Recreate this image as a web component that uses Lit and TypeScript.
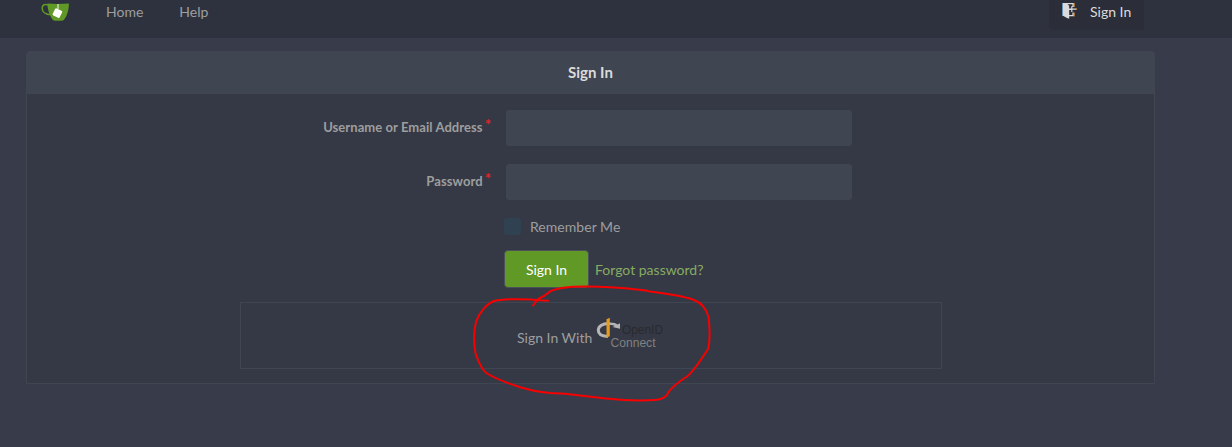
import { LitElement, html, css } from "lit";
import { customElement } from "lit/decorators.js";

@customElement("app-root")
export class AppRoot extends LitElement {
  static styles = css`
    :host {
      display: block;
      position: relative;
      height: 447px;
      overflow: hidden;
      background: #383c4a;
      color: #9e9e9e;
      font: 14px/20px Lato, "Liberation Sans", sans-serif;
    }
    * { box-sizing: border-box; }
    .nav {
      display: flex;
      height: 38px;
      padding: 0 88px 0 41px;
      background: #2e323e;
    }
    .logo { width: 28px; height: 22px; margin-right: 37px; }
    .nav-link { margin-right: 36px; padding-top: 2px; }
    .nav-sign {
      display: flex;
      width: 95px;
      height: 30px;
      margin-left: auto;
      padding: 2px 0 0 13px;
      border-radius: 0 0 4px 4px;
      background: #2b2d39;
      color: #dbdbdb;
    }
    .door { width: 15px; height: 18px; margin: 0 13px 0 0; }
    .card { width: 1129px; height: 333px; margin: 13px 0 0 26px; border: 1px solid #404552; border-radius: 4px 4px 0 0; background: #353945; }
    .title {
      height: 42px;
      margin: 0;
      background: #404552;
      color: #dbdbdb;
      font-size: 15px;
      line-height: 40px;
      font-weight: 700;
      text-align: center;
    }
    .form { padding-top: 16px; }
    .field { display: flex; height: 36px; margin-bottom: 18px; }
    .label {
      display: flex;
      justify-content: flex-end;
      width: 464px;
      margin-right: 15px;
      padding-top: 7px;
      font-size: 13px;
      font-weight: 700;
      letter-spacing: 0.07px;
    }
    .star { margin: -3px 0 0 2px; color: #db2828; font-size: 15px; letter-spacing: 0; }
    .input { width: 346px; height: 36px; border: 0; border-radius: 3px; background: #404552; }
    .remember { display: flex; height: 20px; margin-left: 477px; line-height: 18px; letter-spacing: 0.04px; }
    .box { width: 17px; height: 17px; margin: 0 9px 0 0; border-radius: 3px; background: #304251; }
    .actions { display: flex; align-items: center; height: 38px; margin: 12px 0 0 477px; }
    .submit {
      width: 85px;
      height: 38px;
      margin-right: 6px;
      padding: 1px 0 0;
      border: 1px solid #4c505c;
      border-radius: 4px;
      background: #609926;
      color: #fff;
      font: inherit;
    }
    .forgot { padding-top: 1px; color: #87ab63; }
    .oauth {
      display: flex;
      width: 702px;
      height: 67px;
      margin: 14px 0 0 213px;
      padding: 14px 0 0 276px;
      border: 1px solid #404552;
    }
    .with { padding-top: 11px; white-space: nowrap; }
    .openid { width: 70px; height: 36px; margin-left: 4px; }
    .mark { position: absolute; inset: 0; width: 1232px; height: 447px; pointer-events: none; }
  `;

  render() {
    return html`
      <nav class="nav">
        <svg class="logo" viewBox="0 0 28 22">
          <path d="M8 5.200C4.500 4 1.200 4.300 1.200 8.200c0 4 3.800 6.300 9.300 6.600" fill="none" stroke="#609926" stroke-width="1.500" />
          <path d="M6.500 3.600c6 .7 14 .6 21.300 0 .3 5-1.500 12-4.300 15.400-.7 1.200-1.400 1.700-2.800 1.700h-6.500c-2 0-3.500-2-4.700-4.500C7.700 12.500 6.300 8 6.500 3.600z" fill="#609926" />
          <path d="M17 4v5" stroke="#c8dcb0" stroke-width="1.500" />
          <rect x="12.500" y="9.200" width="7.800" height="7.800" rx="1.200" transform="rotate(26 16.400 13.100)" fill="#fff" />
        </svg>
        <span class="nav-link">Home</span>
        <span class="nav-link">Help</span>
        <span class="nav-sign">
          <svg class="door" viewBox="0 0 15 18">
            <path d="M1 1h10.800v4h-1.400V2.300H5.500l1.700 1.400v2.800h2V4.200h1.200v2.200h3.800v1.400h-3.800V10H9.200V7.900h-2v5h3.200v-2.400h1.400v3.800H7.200v2.400L5 16l-4-2.200z" fill="#dbdbdb" />
            <path d="M12.300 1v4M12.300 10.500v4M14.600 6.200v1.800" stroke="#c08038" stroke-width="1" />
            <path d="M.5 1v13" stroke="#6a94b8" stroke-width="1" />
          </svg>
          Sign In
        </span>
      </nav>
      <section class="card">
        <h4 class="title">Sign In</h4>
        <div class="form">
          <div class="field">
            <label class="label">Username or Email Address<span class="star">*</span></label>
            <input class="input" type="text" />
          </div>
          <div class="field">
            <label class="label">Password<span class="star">*</span></label>
            <input class="input" type="password" />
          </div>
          <div class="remember"><span class="box"></span>Remember Me</div>
          <div class="actions">
            <button class="submit">Sign In</button>
            <a class="forgot">Forgot password?</a>
          </div>
          <div class="oauth">
            <span class="with">Sign In With</span>
            <svg class="openid" viewBox="0 0 70 36">
              <path d="M14 6.500C6.500 6 2.300 9.500 2.300 13.200c0 3.800 3.500 6 9.700 6.300" fill="none" stroke="#b5b5b5" stroke-width="3" />
              <path d="M14 5.500c4 .1 6 .8 7.600 1.900l2.400-1.200v5.600l-7.500-1.800 2.300-1c-1.500-.8-3-1-4.800-1z" fill="#b5b5b5" />
              <path d="M10.500 2.200 13.800.8v18.400l-3.300 1.600z" fill="#e69a20" />
              <text x="26" y="17" font-family="Liberation Sans, sans-serif" font-size="12" textLength="41" lengthAdjust="spacingAndGlyphs" fill="#292a2e">OpenID</text>
              <text x="14.500" y="30" font-family="Liberation Sans, sans-serif" font-size="12" textLength="45" lengthAdjust="spacingAndGlyphs" fill="#808181">Connect</text>
            </svg>
          </div>
        </div>
      </section>
      <svg class="mark" viewBox="0 0 1232 447">
        <path d="M548 300.700 540 300.300C530 299 508 298.500 496 300.500C487 302.500 479 313 476 322C473.500 332 474 345 475.500 353C478 361 482 370 487 373.500C498 380 510 384 521 387.500C530 390 540 392.300 550 393C560 393.300 573 394.500 580 395.500L606 398.500C620 400 640 401 655 400C662 399.500 667 396.500 668 393C671 388 680 381 687 376.500C694 371 701 360 708 349C710 343 710 328 708.500 317C706 308 701 302.500 694 300C682 295.500 667 293.500 650 291.500C640 289 620 288 600 286.800C580 286 560 286 550 291.500C546 295 543 297 538 299C535.500 301 535 304 533 305.500" fill="none" stroke="#f80000" stroke-width="2" stroke-linecap="round" stroke-linejoin="round" />
      </svg>
    `;
  }
}
